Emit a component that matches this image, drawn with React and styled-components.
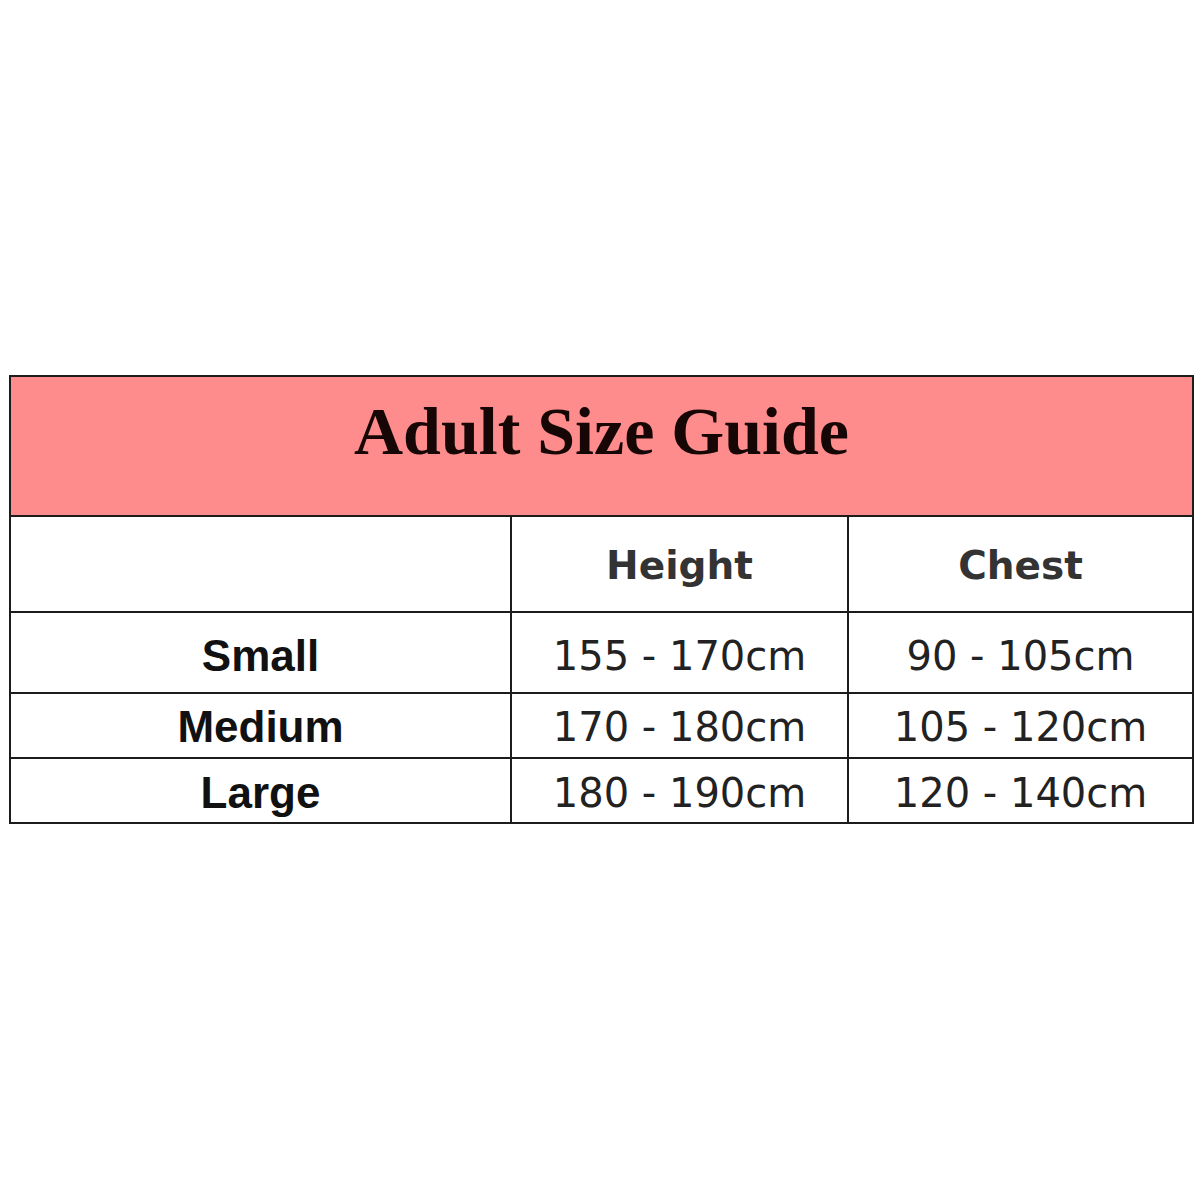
import React from "react";
import styled, { createGlobalStyle } from "styled-components";

const Global = createGlobalStyle`
  html, body { margin: 0; padding: 0; background: #ffffff; }
  body { width: 1200px; height: 1200px; overflow: hidden; }
`;

const Page = styled.div`
  width: 1200px;
  height: 1200px;
  background: #ffffff;
  padding: 375px 0 0 9px;
  box-sizing: border-box;
`;

const Table = styled.table`
  border-collapse: collapse;
  table-layout: fixed;
  width: 1183px;
  border: 2px solid #1c1c1c;
`;

const Row = styled.tr`
  height: ${(p) => p.$h}px;
`;

const Cell = styled.td`
  border: 2px solid #1c1c1c;
  padding: 0;
  text-align: center;
  vertical-align: middle;
  box-sizing: border-box;
`;

const TitleCell = styled(Cell)`
  background: #ff8c8c;
  font-family: "Liberation Serif", "Times New Roman", serif;
  font-weight: 700;
  font-size: 68px;
  color: #160606;
  letter-spacing: 0px;
  padding-bottom: 30px;
`;

const HeadCell = styled(Cell)`
  font-family: "DejaVu Sans", Verdana, sans-serif;
  font-weight: 700;
  font-size: 39px;
  color: #333333;
  padding-top: 2px;
`;

const SizeCell = styled(Cell)`
  font-family: "Liberation Sans", Arial, sans-serif;
  font-weight: 700;
  font-size: 44px;
  color: #111111;
  padding-top: ${(p) => p.$pt || 0}px;
`;

const ValueCell = styled(Cell)`
  font-family: "DejaVu Sans", Verdana, sans-serif;
  font-weight: 400;
  font-size: 40px;
  color: #222222;
  padding-top: ${(p) => p.$pt || 0}px;
`;

const rows = [
  { size: "Small", height: "155 - 170cm", chest: "90 - 105cm", h: 81, pt: 6 },
  { size: "Medium", height: "170 - 180cm", chest: "105 - 120cm", h: 65, pt: 2 },
  { size: "Large", height: "180 - 190cm", chest: "120 - 140cm", h: 65, pt: 4 },
];

export default function App() {
  return (
    <Page>
      <Global />
      <Table>
        <colgroup>
          <col style={{ width: 501 }} />
          <col style={{ width: 337 }} />
          <col style={{ width: 345 }} />
        </colgroup>
        <tbody>
          <Row $h={140}>
            <TitleCell colSpan={3}>Adult Size Guide</TitleCell>
          </Row>
          <Row $h={96}>
            <HeadCell />
            <HeadCell>Height</HeadCell>
            <HeadCell>Chest</HeadCell>
          </Row>
          {rows.map((r) => (
            <Row key={r.size} $h={r.h}>
              <SizeCell $pt={r.pt}>{r.size}</SizeCell>
              <ValueCell $pt={r.pt}>{r.height}</ValueCell>
              <ValueCell $pt={r.pt}>{r.chest}</ValueCell>
            </Row>
          ))}
        </tbody>
      </Table>
    </Page>
  );
}
